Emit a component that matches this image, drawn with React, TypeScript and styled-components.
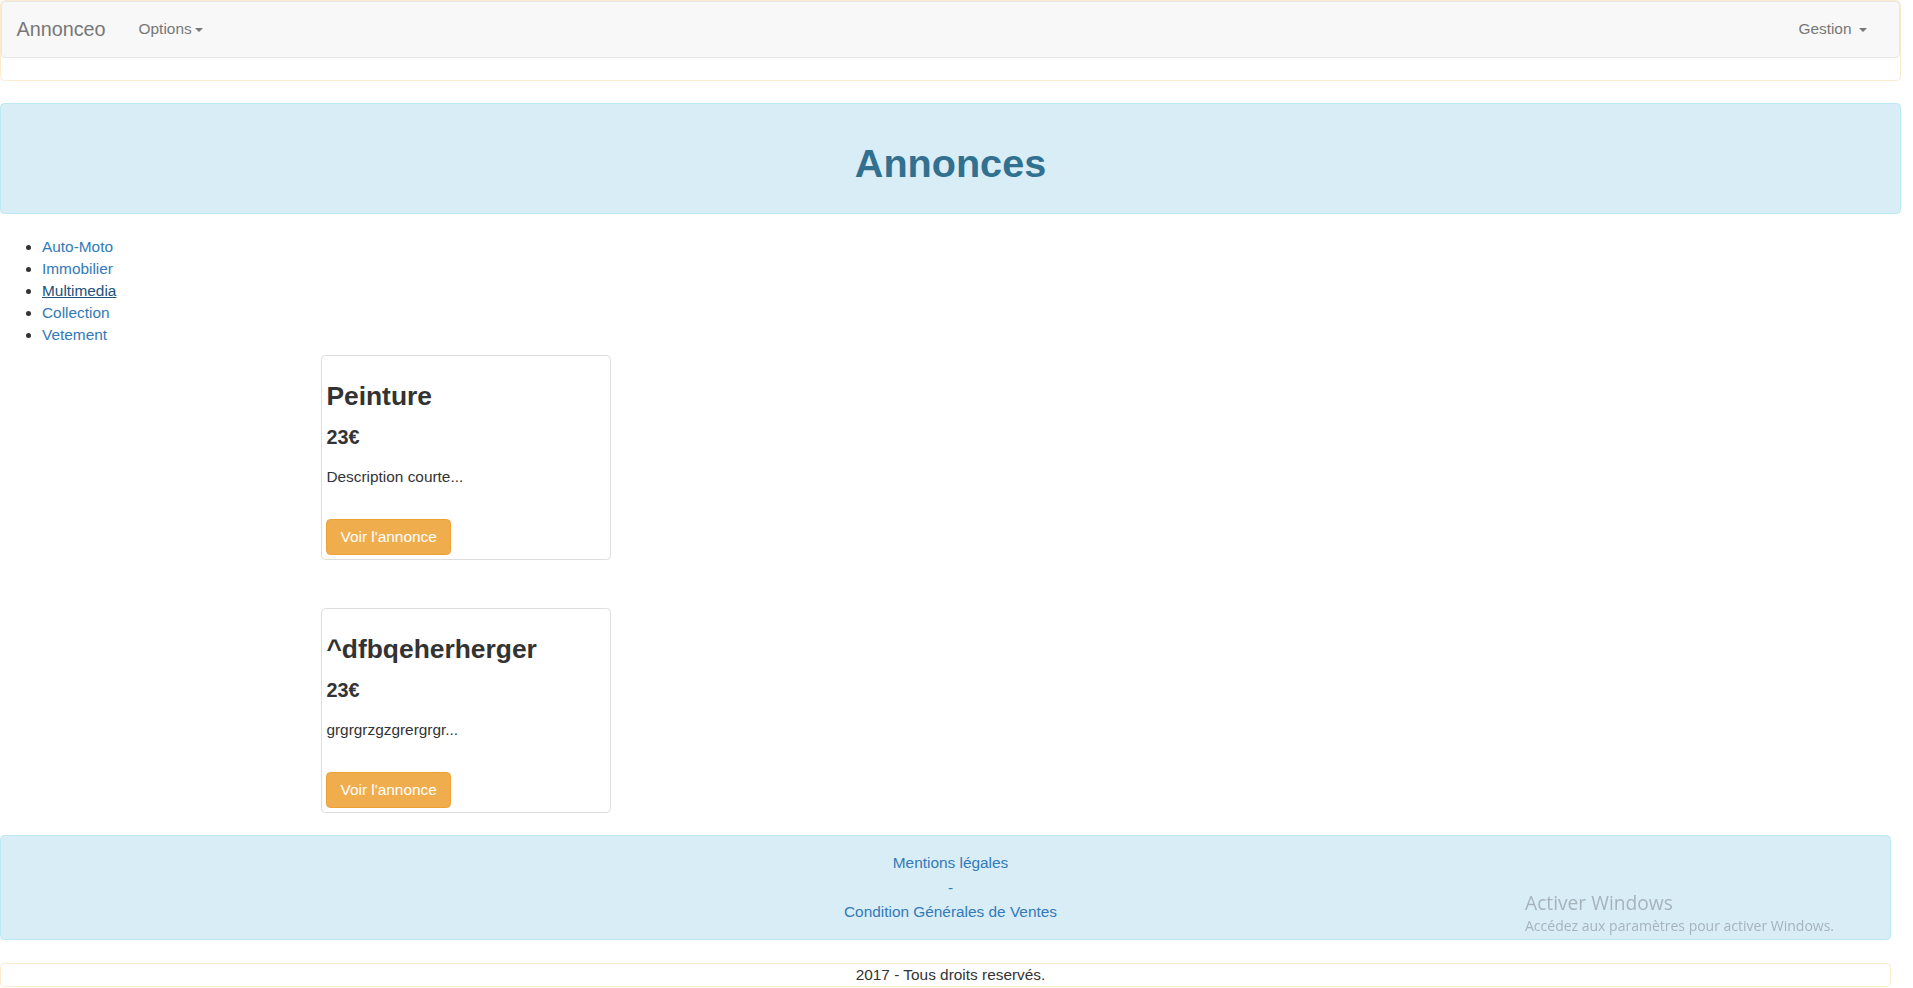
import styled, { createGlobalStyle } from 'styled-components';

const GlobalStyle = createGlobalStyle`
  html, body {
    margin: 0;
    padding: 0;
    background: #fff;
  }

  body {
    font-family: "Liberation Sans", Arial, Helvetica, sans-serif;
    font-size: 15.4px;
    line-height: 22px;
    color: #333;
  }

  * {
    box-sizing: border-box;
  }
`;

const categories = ['Auto-Moto', 'Immobilier', 'Multimedia', 'Collection', 'Vetement'];

const annonces = [
  { title: 'Peinture', price: '23€', description: 'Description courte...' },
  { title: '^dfbqeherherger', price: '23€', description: 'grgrgrzgzgrergrgr...' }
];

/**
 * Styles
 */

const Page = styled.div`
  width: 1901px;
`;

const HeaderPanel = styled.header`
  border: 1px solid #faebcc;
  border-radius: 4.4px;
  margin-bottom: 22px;
`;

const Navbar = styled.nav`
  display: flex;
  align-items: center;
  justify-content: space-between;
  background: #f8f8f8;
  border: 1px solid #e7e7e7;
  border-radius: 4.4px;
  min-height: 57px;
  margin-bottom: 22px;
`;

const NavGroup = styled.div<{ $right?: boolean }>`
  display: flex;
  align-items: center;
  margin-right: ${({ $right }) => ($right ? '16px' : '0')};
`;

const Brand = styled.a`
  padding: 15.5px 16.5px 17.5px 14.5px;
  font-size: 19.8px;
  line-height: 22px;
  color: #777;
  text-decoration: none;
`;

const NavLink = styled.a`
  display: flex;
  align-items: center;
  padding: 15.5px 16.5px 17.5px;
  font-size: 15.4px;
  line-height: 22px;
  color: #777;
  text-decoration: none;
`;

const Caret = styled.span<{ $gap: number }>`
  display: inline-block;
  width: 0;
  height: 0;
  margin-left: ${({ $gap }) => $gap}px;
  margin-top: 2px;
  border-top: 4.4px solid #777;
  border-left: 4.4px solid transparent;
  border-right: 4.4px solid transparent;
`;

const Jumbotron = styled.section`
  background: #d9edf7;
  border: 1px solid #bce8f1;
  border-radius: 4.4px;
  padding: 16.5px;
  margin-bottom: 22px;
`;

const Title = styled.h1`
  margin: 21px 0 11px;
  font-size: 39.6px;
  line-height: 1.1;
  font-weight: 700;
  color: #31708f;
  text-align: center;
`;

const CategoryList = styled.ul`
  margin: 0 0 9.5px;
  padding-left: 42px;
`;

const CategoryItem = styled.li`
  line-height: 22px;
`;

const CategoryLink = styled.a<{ $active?: boolean }>`
  color: ${({ $active }) => ($active ? '#23527c' : '#337ab7')};
  text-decoration: ${({ $active }) => ($active ? 'underline' : 'none')};
`;

const CardList = styled.div`
  display: flex;
  flex-direction: column;
  gap: 48px;
  margin: 0 0 22px 321px;
`;

const Card = styled.article`
  width: 290px;
  padding: 4.4px;
  border: 1px solid #ddd;
  border-radius: 4.4px;
`;

const CardTitle = styled.h3`
  margin: 22px 0 0;
  font-size: 26.4px;
  line-height: 1.1;
  font-weight: 700;
  color: #333;
`;

const CardPrice = styled.h4`
  margin: 16px 0 0;
  font-size: 19.8px;
  line-height: 1.1;
  font-weight: 700;
  color: #333;
`;

const CardText = styled.p`
  margin: 16.4px 0 31px;
  font-size: 15.4px;
  line-height: 22px;
`;

const WarningButton = styled.a`
  display: inline-block;
  padding: 6px 13.2px;
  font-size: 15.4px;
  line-height: 22px;
  color: #fff;
  background: #f0ad4e;
  border: 1px solid #eea236;
  border-radius: 4.4px;
  text-decoration: none;
`;

const Footer = styled.footer`
  width: 1891px;
  display: flex;
  flex-direction: column;
  align-items: center;
  gap: 2.5px;
  padding: 16px 0 16px 10px;
  background: #d9edf7;
  border: 1px solid #bce8f1;
  border-radius: 4.4px;
  margin-bottom: 23px;
`;

const FooterLink = styled.a`
  color: #337ab7;
  text-decoration: none;
  line-height: 22px;
`;

const Copyright = styled.div`
  width: 1891px;
  padding-left: 10px;
  border: 1px solid #faebcc;
  border-radius: 4.4px;
  text-align: center;
  line-height: 22px;
`;

const Watermark = styled.div`
  position: fixed;
  left: 1525px;
  top: 890px;
  font-family: "Open Sans", "Noto Sans", sans-serif;
  color: rgba(95, 100, 105, 0.42);
  pointer-events: none;
`;

const WatermarkTitle = styled.div`
  font-size: 19.2px;
  line-height: 26px;
`;

const WatermarkText = styled.div`
  font-size: 14px;
  line-height: 20px;
`;

/**
 * Styles
 */

function App() {
  return (
    <Page>
      <GlobalStyle />
      <HeaderPanel>
        <Navbar>
          <NavGroup>
            <Brand href="#">Annonceo</Brand>
            <NavLink href="#">
              Options
              <Caret $gap={3} />
            </NavLink>
          </NavGroup>
          <NavGroup $right>
            <NavLink href="#">
              Gestion
              <Caret $gap={7} />
            </NavLink>
          </NavGroup>
        </Navbar>
      </HeaderPanel>

      <Jumbotron>
        <Title>Annonces</Title>
      </Jumbotron>

      <CategoryList>
        {categories.map((category) => (
          <CategoryItem key={category}>
            <CategoryLink href="#" $active={category === 'Multimedia'}>
              {category}
            </CategoryLink>
          </CategoryItem>
        ))}
      </CategoryList>

      <CardList>
        {annonces.map((annonce) => (
          <Card key={annonce.title}>
            <CardTitle>{annonce.title}</CardTitle>
            <CardPrice>{annonce.price}</CardPrice>
            <CardText>{annonce.description}</CardText>
            <WarningButton href="#">Voir l'annonce</WarningButton>
          </Card>
        ))}
      </CardList>

      <Footer>
        <FooterLink href="#">Mentions légales</FooterLink>
        <FooterLink href="#">-</FooterLink>
        <FooterLink href="#">Condition Générales de Ventes</FooterLink>
      </Footer>

      <Copyright>2017 - Tous droits reservés.</Copyright>

      <Watermark>
        <WatermarkTitle>Activer Windows</WatermarkTitle>
        <WatermarkText>Accédez aux paramètres pour activer Windows.</WatermarkText>
      </Watermark>
    </Page>
  );
}

export default App;
